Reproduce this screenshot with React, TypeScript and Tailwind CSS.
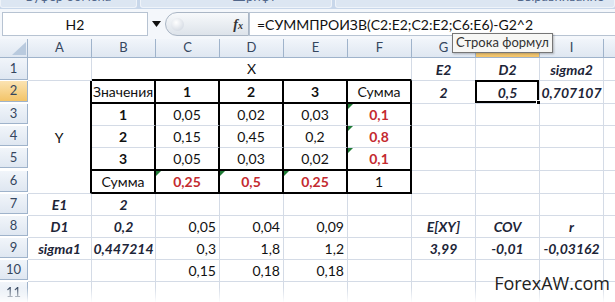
import type { ReactNode } from 'react'

type Kind = 'n' | 'b' | 'bi' | 'red'

interface CellSpec {
  t?: string
  kind?: Kind
  align?: 'c' | 'r' | 'l'
  border: string
  tri?: boolean
  span?: string
  selected?: boolean
}

const gR = 'border-r border-r-[#d4dbe6]'
const gB = 'border-b border-b-[#d4dbe6]'
const kR = 'border-r-2 border-r-black'
const kB = 'border-b-2 border-b-black'

const norm = `${gR} ${gB}`
const tHead = `${kR} ${kB}`
const tMid = `${kR} ${gB}`

const kindClass: Record<Kind, string> = {
  n: 'text-[#111]',
  b: 'font-bold text-[#111]',
  bi: 'font-bold italic text-[#1d2538]',
  red: 'font-bold text-[#c42a2f]',
}

const alignClass = {
  c: 'justify-center',
  r: 'justify-end pr-[3px]',
  l: 'justify-start pl-[1px]',
}

const rowHeights = ['h-[22px]', 'h-[21px]', 'h-[20px]', 'h-[20px]', 'h-[20px]', 'h-[21px]', 'h-[20px]', 'h-[20px]', 'h-[20px]', 'h-[20px]']

const e = (border: string = norm): CellSpec => ({ border })

const rows: CellSpec[][] = [
  [
    e(),
    { t: 'X', border: `${gR} ${kB}`, span: 'col-span-5' },
    { t: 'E2', kind: 'bi', border: norm },
    { t: 'D2', kind: 'bi', border: norm },
    { t: 'sigma2', kind: 'bi', border: norm },
  ],
  [
    { t: 'Y', border: `${kR} ${gB}`, span: 'row-span-5' },
    { t: 'Значения', border: tHead, align: 'l' },
    { t: '1', kind: 'b', border: tHead },
    { t: '2', kind: 'b', border: tHead },
    { t: '3', kind: 'b', border: tHead },
    { t: 'Сумма', border: tHead },
    { t: '2', kind: 'bi', border: norm },
    { t: '0,5', kind: 'bi', border: norm, selected: true },
    { t: '0,707107', kind: 'bi', border: norm },
  ],
  [
    { t: '1', kind: 'b', border: tMid },
    { t: '0,05', border: tMid },
    { t: '0,02', border: tMid },
    { t: '0,03', border: tMid },
    { t: '0,1', kind: 'red', border: tMid, tri: true },
    e(),
    e(),
    e(),
  ],
  [
    { t: '2', kind: 'b', border: tMid },
    { t: '0,15', border: tMid },
    { t: '0,45', border: tMid },
    { t: '0,2', border: tMid },
    { t: '0,8', kind: 'red', border: tMid, tri: true },
    e(),
    e(),
    e(),
  ],
  [
    { t: '3', kind: 'b', border: tHead },
    { t: '0,05', border: tHead },
    { t: '0,03', border: tHead },
    { t: '0,02', border: tHead },
    { t: '0,1', kind: 'red', border: tHead, tri: true },
    e(),
    e(),
    e(),
  ],
  [
    { t: 'Сумма', border: tHead },
    { t: '0,25', kind: 'red', border: tHead, tri: true },
    { t: '0,5', kind: 'red', border: tHead, tri: true },
    { t: '0,25', kind: 'red', border: tHead, tri: true },
    { t: '1', border: tHead },
    e(),
    e(),
    e(),
  ],
  [
    { t: 'E1', kind: 'bi', border: norm },
    { t: '2', kind: 'bi', border: norm },
    e(),
    e(),
    e(),
    e(),
    e(),
    e(),
    e(),
  ],
  [
    { t: 'D1', kind: 'bi', border: norm },
    { t: '0,2', kind: 'bi', border: norm },
    { t: '0,05', align: 'r', border: norm },
    { t: '0,04', align: 'r', border: norm },
    { t: '0,09', align: 'r', border: norm },
    e(),
    { t: 'E[XY]', kind: 'bi', border: norm },
    { t: 'COV', kind: 'bi', border: norm },
    { t: 'r', kind: 'bi', border: norm },
  ],
  [
    { t: 'sigma1', kind: 'bi', border: norm },
    { t: '0,447214', kind: 'bi', border: norm },
    { t: '0,3', align: 'r', border: norm },
    { t: '1,8', align: 'r', border: norm },
    { t: '1,2', align: 'r', border: norm },
    e(),
    { t: '3,99', kind: 'bi', border: norm },
    { t: '-0,01', kind: 'bi', border: norm },
    { t: '-0,03162', kind: 'bi', border: norm },
  ],
  [
    e(),
    e(),
    { t: '0,15', align: 'r', border: norm },
    { t: '0,18', align: 'r', border: norm },
    { t: '0,18', align: 'r', border: norm },
    e(),
    e(),
    e(),
    e(),
  ],
]

const cols = ['A', 'B', 'C', 'D', 'E', 'F', 'G', 'H', 'I']

const headBase = 'flex items-center justify-center text-[13px] text-[#35465e] border-r border-b border-[#9fb3cb]'
const headBg = 'bg-[linear-gradient(#f1f5fa,#dfe7f1)]'
const headSel = 'bg-[linear-gradient(#fbe3b2,#f3c468)] text-[#3a2c10]'

const Cell = ({ c }: { c: CellSpec }) => (
  <div
    className={`relative flex items-center ${alignClass[c.align ?? 'c']} ${kindClass[c.kind ?? 'n']} ${c.border} ${c.span ?? ''} whitespace-nowrap`}
  >
    {c.tri && (
      <span className="absolute left-0 top-0 h-0 w-0 border-r-[5px] border-t-[5px] border-r-transparent border-t-[#1f7a35]" />
    )}
    {c.t}
    {c.selected && (
      <span className="absolute -left-[1px] -top-[1px] right-0 bottom-0 border-2 border-black">
        <span className="absolute -bottom-[4px] -right-[4px] h-[5px] w-[5px] border border-white bg-black" />
      </span>
    )}
  </div>
)

const RibbonTab = ({ w, children }: { w: string; children: ReactNode }) => (
  <div className={`${w} flex h-[8px] justify-center overflow-hidden rounded-b-[3px] border-x border-b border-[#eef3f9] bg-[#dce6f2]`}>
    <span className="-mt-[11px] text-[13px] leading-[15px] text-[#51668a]">{children}</span>
  </div>
)

export default function App() {
  return (
    <div className="relative h-[302px] w-[615px] overflow-hidden bg-white font-['Lato','Liberation_Sans',sans-serif] text-[14px]">
      {/* ribbon group labels */}
      <div className="flex h-[9px] gap-[3px] bg-[#c8d7ea]">
        <RibbonTab w="w-[137px]">Буфер обмена</RibbonTab>
        <RibbonTab w="w-[193px]">
          <span className="ml-[36px]">Шрифт</span>
        </RibbonTab>
        <RibbonTab w="w-[280px]">
          <span className="ml-[170px]">Выравнивание</span>
        </RibbonTab>
      </div>

      {/* formula bar */}
      <div className="flex h-[27px] items-stretch bg-[#f4f7fb] pt-[3px]">
        <div className="ml-[2px] flex w-[146px] items-center justify-center border border-[#b7c3d2] bg-white text-[14px] text-[#111]">
          H2
        </div>
        <div className="flex w-[17px] items-center justify-center">
          <svg width="9" height="6" viewBox="0 0 9 6">
            <path d="M0 0h9L4.5 6z" fill="#111" />
          </svg>
        </div>
        <div className="relative flex w-[84px] items-center justify-end rounded-l-full border border-[#aab6c5] bg-[linear-gradient(#f7f9fb,#dde3ea)] pr-[5px]">
          <span className="absolute left-[5px] top-[5px] h-[13px] w-[13px] rounded-full bg-[radial-gradient(circle_at_40%_35%,#ffffff,#c9d1dc)]" />
          <span className="font-['Liberation_Serif',serif] text-[14px] font-bold italic text-[#333]">
            f<span className="text-[10px]">x</span>
          </span>
        </div>
        <div className="flex flex-1 items-center border-y border-l border-[#b7c3d2] bg-white pl-[7px] text-[14px] text-[#111]">
          =СУММПРОИЗВ(C2:E2;C2:E2;C6:E6)-G2^2
        </div>
      </div>
      <div className="h-[3px] bg-[#f4f7fb]" />

      {/* sheet grid */}
      <div className="grid grid-cols-[28px_repeat(9,64px)_11px]">
        <div className={`${headBase} ${headBg} h-[19px] items-end justify-end`}>
          <svg width="14" height="13" viewBox="0 0 14 13" className="mb-[2px] mr-[1px]">
            <path d="M14 0v13H0z" fill="#b9cade" />
          </svg>
        </div>
        {cols.map((c) => (
          <div key={c} className={`${headBase} ${c === 'H' ? headSel : headBg} h-[19px]`}>
            {c}
          </div>
        ))}
        <div className={`${headBg} h-[19px] border-b border-[#9fb3cb]`} />

        {rows.map((row, ri) => [
          <div key={`h${ri}`} className={`${headBase} ${ri === 1 ? headSel : headBg} ${rowHeights[ri]}`}>
            {ri + 1}
          </div>,
          ...row.map((c, ci) => <Cell key={`c${ri}-${ci}`} c={c} />),
          <div key={`j${ri}`} className={gB} />,
        ])}
      </div>

      {/* row 11, fading out */}
      <div className="grid h-[22px] grid-cols-[28px_repeat(9,64px)_11px] [mask-image:linear-gradient(to_bottom,black_25%,transparent_95%)]">
        <div className={`${headBase} ${headBg} items-start border-b-0 pt-[1px]`}>11</div>
        {cols.map((c) => (
          <div key={c} className={gR} />
        ))}
      </div>

      <div className="absolute bottom-[5px] right-[5px] font-['Open_Sans','Liberation_Sans',sans-serif] text-[18px] text-[#222]">
        ForexAW.com
      </div>

      {/* tooltip */}
      <div className="absolute left-[452px] top-[33px] flex h-[20px] w-[101px] items-center justify-center border border-[#767676] bg-[#f7f7f5] text-[13px] text-[#333] shadow-[1px_1px_2px_rgba(0,0,0,0.25)]">
        Строка формул
      </div>
    </div>
  )
}
